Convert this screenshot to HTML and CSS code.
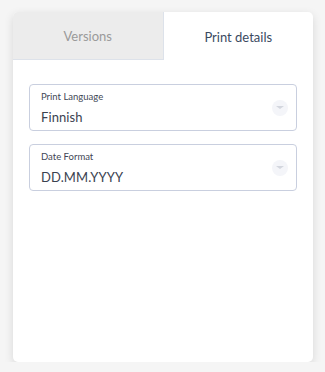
FILE: index.html
```html
<!DOCTYPE html>
<html lang="en">

<head>
  <meta charset="UTF-8" />
  <title>Print details</title>
  <link rel="stylesheet" href="styles.css">
</head>

<body>
  <div class="card">
    <div class="tabs">
      <div class="tab">Versions</div>
      <div class="tab active">Print details</div>
    </div>
    <div class="panel">
      <div class="field">
        <div class="field-text">
          <span class="field-label">Print Language</span>
          <span class="field-value">Finnish</span>
        </div>
        <span class="caret"><i></i></span>
      </div>
      <div class="field">
        <div class="field-text">
          <span class="field-label">Date Format</span>
          <span class="field-value">DD.MM.YYYY</span>
        </div>
        <span class="caret"><i></i></span>
      </div>
    </div>
  </div>
</body>

</html>
```

FILE: styles.css
```css
body {
  margin: 0;
  padding: 12px 0 0 13px;
  background-color: #f5f5f5;
  font-family: 'Lato', sans-serif;
}

.card {
  width: 300px;
  height: 350px;
  background-color: #fff;
  border-radius: 5px;
  box-shadow: 0 3px 10px rgba(0, 0, 0, 0.12);
  overflow: hidden;
  display: flex;
  flex-direction: column;
}

.tabs {
  display: flex;
  height: 48px;
}

.tab {
  flex: 1;
  display: flex;
  align-items: center;
  justify-content: center;
  font-size: 13px;
  color: #3a4a5f;
  padding-top: 1px;
}

.tab:first-child {
  background-color: #ececec;
  color: #9a9a9a;
  border-right: 1px solid #dde2ea;
  border-bottom: 1px solid #dde2ea;
}

.panel {
  padding: 24px 16px 0 16px;
  display: flex;
  flex-direction: column;
  gap: 13px;
}

.field {
  height: 47px;
  box-sizing: border-box;
  border: 1px solid #c9cfdf;
  border-radius: 4px;
  display: flex;
  align-items: center;
  justify-content: space-between;
  padding: 0 8px 0 11px;
}

.field-text {
  display: flex;
  flex-direction: column;
  padding-top: 1px;
}

.field-label {
  font-size: 9.5px;
  color: #3f4756;
  margin-bottom: 7px;
}

.field-value {
  font-size: 13px;
  color: #3a4250;
  letter-spacing: 0.1px;
}

.caret {
  width: 16px;
  height: 16px;
  border-radius: 50%;
  background-color: #f4f5f9;
  display: flex;
  align-items: center;
  justify-content: center;
}

.caret i {
  width: 0;
  height: 0;
  border-left: 4px solid transparent;
  border-right: 4px solid transparent;
  border-top: 3px solid #d3d6de;
}
```
